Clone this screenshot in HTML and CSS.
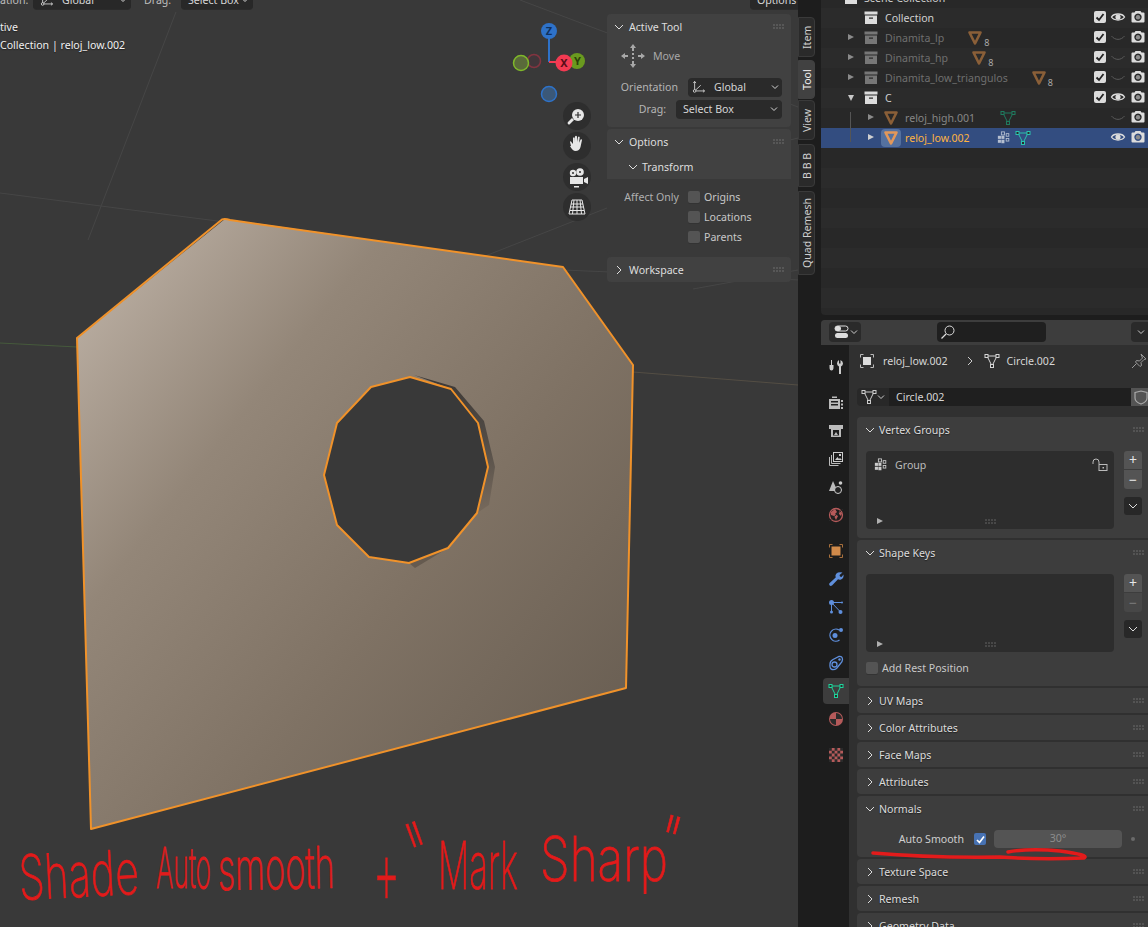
FILE: index.html
```html
<!DOCTYPE html>
<html lang="en">
<head>
<meta charset="utf-8">
<title>Blender – Auto Smooth</title>
<link rel="stylesheet" href="styles.css">
</head>
<body>
<svg class="defs" width="0" height="0" aria-hidden="true">
  <symbol id="tri" viewBox="0 0 16 16"><path d="M3 3h10L8 13z" fill="none" stroke="currentColor" stroke-width="1"/><g fill="#2a2a2a" stroke="currentColor" stroke-width="1"><rect x="1" y="1.500" width="3" height="3"/><rect x="12" y="1.500" width="3" height="3"/><rect x="6.500" y="11.500" width="3" height="3"/></g></symbol>
  <symbol id="obj" viewBox="0 0 16 16"><path d="M2.500 2.500h11L8 13.500z" fill="none" stroke="currentColor" stroke-width="2.600" stroke-linejoin="round"/></symbol>
  <symbol id="vg" viewBox="0 0 16 16"><g fill="currentColor"><rect x="5" y="1" width="3.500" height="3.500" fill="none" stroke="currentColor"/><rect x="1" y="5.500" width="3.500" height="3.500"/><rect x="5" y="5.500" width="3.500" height="3.500"/><rect x="1" y="10" width="3.500" height="3.500"/><rect x="5" y="10" width="3.500" height="4"/><rect x="10.500" y="3" width="3" height="3" fill="none" stroke="currentColor"/><rect x="10.500" y="8.500" width="3" height="3" fill="none" stroke="currentColor"/></g></symbol>
  <symbol id="coll" viewBox="0 0 16 16"><path fill="currentColor" d="M1.500 1.500h13v3h-13zM2 5.500h12v8.500H2zM6 7.500v1.300h4V7.500z" fill-rule="evenodd"/></symbol>
  <symbol id="check" viewBox="0 0 12 12"><rect width="12" height="12" rx="2" fill="currentColor"/><path d="M2.500 6.500l2.500 2.500 4.500-6" fill="none" stroke="#222" stroke-width="1.800"/></symbol>
  <symbol id="eye" viewBox="0 0 16 16"><path d="M1.500 8C4 4 12 4 14.500 8 12 12 4 12 1.500 8z" fill="none" stroke="currentColor" stroke-width="1.400"/><circle cx="8" cy="8" r="2.600" fill="currentColor"/></symbol>
  <symbol id="eyeoff" viewBox="0 0 16 16"><path d="M1.500 7C5 11.500 11 11.500 14.500 7" fill="none" stroke="currentColor" stroke-width="1"/></symbol>
  <symbol id="cam" viewBox="0 0 16 16"><path fill="currentColor" fill-rule="evenodd" d="M2.500 3.500h2l1-1.500h5l1 1.500h2q1 0 1 1v8q0 1-1 1h-11q-1 0-1-1v-8q0-1 1-1zM8 4.500a3.700 3.700 0 1 0 .01 0z"/><circle cx="8" cy="8.200" r="2.200" fill="#8c8c8c"/></symbol>
  <symbol id="down" viewBox="0 0 8 8"><path d="M1 2.500L4 5.500 7 2.500" fill="none" stroke="currentColor" stroke-width="1"/></symbol>
  <symbol id="right" viewBox="0 0 10 10"><path d="M3 1L7 5 3 9" fill="none" stroke="currentColor" stroke-width="1"/></symbol>
  <symbol id="open" viewBox="0 0 10 10"><path d="M1 3L5 7 9 3" fill="none" stroke="currentColor" stroke-width="1"/></symbol>
  <symbol id="grip" viewBox="0 0 11 6"><path d="M0.500 1h1M3.500 1h1M6.500 1h1M9.500 1h1M0.500 4h1M3.500 4h1M6.500 4h1M9.500 4h1" stroke="currentColor" stroke-width="1"/></symbol>
  <symbol id="axes" viewBox="0 0 16 16"><path d="M3 2v10.500h11M3 12.500L10 6" fill="none" stroke="currentColor" stroke-width="1"/><circle cx="3" cy="12.500" r="1.500" fill="#2a2a2a" stroke="currentColor"/><path d="M1.500 3.500L3 1.500 4.500 3.500M12.500 11l2 1.500-2 1.500" fill="none" stroke="currentColor"/></symbol>
  <symbol id="move" viewBox="0 0 24 24"><path fill="currentColor" d="M12 0l3 4h-2v3h-2V4H9zM12 24l-3-4h2v-3h2v3h2zM0 12l4-3v2h3v2H4v2zM24 12l-4 3v-2h-3v-2h3V9z"/><rect x="11" y="9" width="2" height="2" fill="currentColor"/><rect x="11" y="13" width="2" height="2" fill="currentColor"/></symbol>
</svg>

<main class="app">
  <section class="viewport">
    <svg class="scene" width="798" height="927" viewBox="0 0 798 927">
      <defs>
        <linearGradient id="skin" gradientUnits="userSpaceOnUse" x1="90" y1="280" x2="620" y2="700">
          <stop offset="0" stop-color="#baaea2"/>
          <stop offset="0.3" stop-color="#938678"/>
          <stop offset="0.65" stop-color="#7f7264"/>
          <stop offset="1" stop-color="#6b6054"/>
        </linearGradient>
        <linearGradient id="shade" gradientUnits="userSpaceOnUse" x1="450" y1="375" x2="490" y2="510">
          <stop offset="0" stop-color="#3d3936"/>
          <stop offset="0.5" stop-color="#514b45"/>
          <stop offset="1" stop-color="#76695c"/>
        </linearGradient>
      </defs>
      <g stroke="#464646" stroke-width="1" fill="none">
        <path d="M176 12L88 240M0 193L225 222M520 0L610 34M790 104L798 107M607 208L470 262M790 140L798 138M563 270L800 280M693 289L798 270"/>
        <path d="M0 343L77 347" stroke="#465a3c"/>
        <path d="M633 372L798 385" stroke="#544e44"/>
      </g>
      <path d="M225 219L563 267 633 365 626 688 91 829 77 338z" fill="url(#skin)"/>
      <path d="M414 375L455 387 484 421 495 467 489 505 477 513 488 467 478 423 451 389z" fill="url(#shade)"/>
      <path d="M409 563L448 548 415 568z" fill="#655a4f"/>
      <path fill="#393939" stroke="#f0922a" stroke-width="2" stroke-linejoin="round" d="M410 377L451 389 478 423 488 467 477 513 448 548 409 563 369 557 337 525 324 475 337 423 371 387z"/>
      <path d="M222 219.500Q225 218.500 230 220L563 267 633 365 626 688 91 829 77 338z" fill="none" stroke="#f0922a" stroke-width="2" stroke-linejoin="round"/>

      <g class="gizmo">
        <path d="M549 38V62" stroke="#2e72c9" stroke-width="2"/>
        <path d="M549 62H558" stroke="#f33a52" stroke-width="2"/>
        <circle cx="534" cy="61" r="6.500" fill="#40363a" stroke="#823440" stroke-width="1.500"/>
        <circle cx="521" cy="63" r="7.500" fill="#5a6a3a" stroke="#7fb82a" stroke-width="1.500"/>
        <circle cx="549" cy="94" r="7.500" fill="#3b5878" stroke="#2e72c9" stroke-width="1.500"/>
        <circle cx="549" cy="31" r="8" fill="#2e72c9"/>
        <circle cx="577" cy="61" r="8" fill="#6a9a1f"/>
        <circle cx="564" cy="63" r="8.500" fill="#f33a52"/>
        <text x="549" y="35" class="axis z">Z</text>
        <text x="577.500" y="65" class="axis y">Y</text>
        <text x="564" y="67" class="axis x">X</text>
      </g>
      <g class="navbtns">
        <circle cx="577" cy="116" r="14"/><circle cx="577" cy="146" r="14"/><circle cx="577" cy="177" r="14"/><circle cx="577" cy="207" r="14"/>
      </g>
      <g fill="#e6e6e6" stroke="none">
        <circle cx="578" cy="115" r="6"/>
        <path d="M572 118l2 2-4 4q-1 1-2-0t0-2z"/>
        <path d="M578 112v6M575 115h6" stroke="#2f2f2f" stroke-width="1.200"/>
        <path d="M571 146l-1-4q0-1 1-.5l2 2.500v-6q1-1.500 1.700 0v4l.3-5.500q1-1.500 2 0v5.500l1-5q1-1 1.700 .3l-.7 5.500 1.800-3.500q1.200-.5 1.200 .7l-1.500 7q-1 4-5 4-3 0-5.500-5z"/>
        <circle cx="573" cy="173" r="3.200"/><circle cx="580" cy="172" r="3.800"/>
        <path d="M570 177h13v7h-13zM584 179l4-2v7l-4-2z"/>
        <rect x="574" y="186" width="5" height="1.500"/>
      </g>
      <circle cx="573" cy="173" r="1" fill="#2e2e2e"/><circle cx="580" cy="172" r="1" fill="#2e2e2e"/>
      <path d="M572 200h10l3 14h-16zM577 200v14M570.500 207h13M574 200l-1.500 14M580 200l1.500 14M571 204h12M570 210.500h14" fill="none" stroke="#e6e6e6" stroke-width="1"/>
    </svg>

    <div class="hdr">
      <span class="hdr-label first">ation:</span>
      <span class="combo c1"><svg class="i14"><use href="#axes"/></svg><span class="combo-text">Global</span><svg class="i8"><use href="#down"/></svg></span>
      <span class="hdr-label second">Drag:</span>
      <span class="combo c2"><span>Select Box</span><svg class="i8"><use href="#down"/></svg></span>
      <span class="combo c3"><span>Options</span><svg class="i8"><use href="#down"/></svg></span>
    </div>

    <div class="overlay-text">
      <p>tive</p>
      <p>Collection | reloj_low.002</p>
    </div>

    <aside class="npanel">
      <div class="np np-tool">
        <header class="np-head"><svg class="i10"><use href="#open"/></svg><span>Active Tool</span><svg class="grip"><use href="#grip"/></svg></header>
        <div class="tool-row"><svg class="i24"><use href="#move"/></svg><span>Move</span></div>
        <div class="prop-row orient"><label>Orientation</label><span class="combo c4"><svg class="i14"><use href="#axes"/></svg><span class="combo-text">Global</span><svg class="i8"><use href="#down"/></svg></span></div>
        <div class="prop-row drag"><label>Drag:</label><span class="combo c5"><span>Select Box</span><svg class="i8"><use href="#down"/></svg></span></div>
      </div>
      <div class="np np-options">
        <div class="np-options-top">
          <header class="np-head"><svg class="i10"><use href="#open"/></svg><span>Options</span><svg class="grip"><use href="#grip"/></svg></header>
          <div class="sub-head"><svg class="i10"><use href="#open"/></svg><span>Transform</span></div>
        </div>
        <div class="affect">
          <span class="affect-label">Affect Only</span>
          <div class="affect-list">
            <div class="chk-row"><i class="chk"></i><span>Origins</span></div>
            <div class="chk-row"><i class="chk"></i><span>Locations</span></div>
            <div class="chk-row"><i class="chk"></i><span>Parents</span></div>
          </div>
        </div>
      </div>
      <div class="np np-work">
        <header class="np-head"><svg class="i10"><use href="#right"/></svg><span>Workspace</span><svg class="grip"><use href="#grip"/></svg></header>
      </div>
    </aside>
  </section>

  <nav class="vtabs">
    <span class="vtab t-item">Item</span>
    <span class="vtab t-tool active">Tool</span>
    <span class="vtab t-view">View</span>
    <span class="vtab t-bbb">B B B</span>
    <span class="vtab t-quad">Quad Remesh</span>
  </nav>

  <div class="right">
    <section class="outliner">
      <div class="row scene-row"><svg class="i16 ic-scene"><use href="#coll"/></svg><span>Scene Collection</span></div>
      <div class="row odd"><svg class="i16 ic-coll"><use href="#coll"/></svg><span class="name">Collection</span><span class="vis"><svg class="i12"><use href="#check"/></svg><svg class="i16"><use href="#eye"/></svg><svg class="i16"><use href="#cam"/></svg></span></div>
      <div class="row dim"><b class="tri-r"></b><svg class="i16 ic-coll"><use href="#coll"/></svg><span class="name">Dinamita_lp</span><svg class="i16 ic-obj g1"><use href="#obj"/></svg><em class="cnt">8</em><span class="vis"><svg class="i12"><use href="#check"/></svg><svg class="i16 off"><use href="#eyeoff"/></svg><svg class="i16"><use href="#cam"/></svg></span></div>
      <div class="row odd dim"><b class="tri-r"></b><svg class="i16 ic-coll"><use href="#coll"/></svg><span class="name">Dinamita_hp</span><svg class="i16 ic-obj g2"><use href="#obj"/></svg><em class="cnt">8</em><span class="vis"><svg class="i12"><use href="#check"/></svg><svg class="i16 off"><use href="#eyeoff"/></svg><svg class="i16"><use href="#cam"/></svg></span></div>
      <div class="row dim"><b class="tri-r"></b><svg class="i16 ic-coll"><use href="#coll"/></svg><span class="name">Dinamita_low_triangulos</span><svg class="i16 ic-obj g3"><use href="#obj"/></svg><em class="cnt">8</em><span class="vis"><svg class="i12"><use href="#check"/></svg><svg class="i16 off"><use href="#eyeoff"/></svg><svg class="i16"><use href="#cam"/></svg></span></div>
      <div class="row odd"><b class="tri-d"></b><svg class="i16 ic-coll"><use href="#coll"/></svg><span class="name">C</span><span class="vis"><svg class="i12"><use href="#check"/></svg><svg class="i16"><use href="#eye"/></svg><svg class="i16"><use href="#cam"/></svg></span></div>
      <div class="row child low"><b class="tri-r"></b><svg class="i16 ic-obj"><use href="#obj"/></svg><span class="name">reloj_high.001</span><svg class="i16 ic-tri-dim"><use href="#tri"/></svg><span class="vis"><svg class="i16 off"><use href="#eyeoff"/></svg><svg class="i16"><use href="#cam"/></svg></span></div>
      <div class="row child sel"><b class="tri-r"></b><span class="obj-chip"><svg class="i16"><use href="#obj"/></svg></span><span class="name">reloj_low.002</span><svg class="i14 ic-vg"><use href="#vg"/></svg><svg class="i16 ic-tri"><use href="#tri"/></svg><span class="vis"><svg class="i16"><use href="#eye"/></svg><svg class="i16"><use href="#cam"/></svg></span></div>
      <div class="row"></div><div class="row odd"></div><div class="row"></div><div class="row odd"></div><div class="row"></div><div class="row odd"></div><div class="row"></div><div class="row odd"></div>
    </section>

    <section class="props">
      <header class="props-head">
        <span class="editor-btn"><svg width="15" height="14" viewBox="0 0 15 14"><rect x="1" y="1" width="13" height="5" rx="2.500" fill="none" stroke="#ddd"/><rect x="1" y="1" width="6" height="5" rx="2.500" fill="#ddd"/><rect x="1" y="8" width="13" height="5" rx="2.500" fill="#ddd"/></svg><svg class="i8"><use href="#down"/></svg></span>
        <span class="search"><svg width="16" height="16" viewBox="0 0 16 16"><circle cx="9.500" cy="6.500" r="4.500" fill="none" stroke="#ddd"/><path d="M6 10l-4.500 4.500" stroke="#ddd" stroke-width="1.200"/></svg></span>
        <span class="corner-btn"><svg class="i8"><use href="#down"/></svg></span>
      </header>
      <div class="props-body">
        <nav class="ptabs">
          <span class="ptab"><svg viewBox="0 0 16 16"><path fill="#ccc" d="M3 1h1v5h1.500v2.500q0 3-2 3t-2-3V6H3zM11 1v3.500h1.500V1q2.500 1 2.500 3.500 0 2-2 3V15h-2V7.500q-2-1-2-3Q9 2 11 1z"/></svg></span>
          <span class="pgap g-a"></span>
          <span class="ptab"><svg viewBox="0 0 16 16"><path fill="#bbb" fill-rule="evenodd" d="M1 4h11v10H1zM3 6v1.500h7V6zM3 9v1.500h7V9zM13 5h2v2h-2zM13 8.500h2v2h-2zM13 12h2v2h-2zM4 1.500h5V3H4z"/></svg></span>
          <span class="ptab"><svg viewBox="0 0 16 16"><path fill="#bbb" fill-rule="evenodd" d="M1 2h14v4h-2v8H3V6H1zM5 7v5.500h6V7z"/><path fill="#bbb" d="M6 12l2-3 2 3z"/></svg></span>
          <span class="ptab"><svg viewBox="0 0 16 16"><path fill="none" stroke="#bbb" d="M1.500 6v8.500h9M3.500 4v8.500h9"/><rect x="5.500" y="1.500" width="9" height="9" fill="none" stroke="#ccc"/><path fill="#ccc" d="M7 9l2.500-3 1.500 2 1-1 2 2zM11 3h2v2h-2z"/></svg></span>
          <span class="ptab"><svg viewBox="0 0 16 16"><path fill="#bbb" d="M5 2L9.500 12H1z"/><circle cx="12.500" cy="4" r="1.800" fill="#ccc"/><circle cx="10" cy="11" r="3.500" fill="#222" stroke="#ccc"/></svg></span>
          <span class="ptab"><svg viewBox="0 0 16 16"><circle cx="8" cy="8" r="6.500" fill="none" stroke="#b55a5a" stroke-width="1.300"/><path fill="#b55a5a" d="M3 5l4-3 2 3-2 2 3 2-2 4-2-4-3-1zM11 4l3 2-1 3-2-2z"/><path d="M1 14L15 2" stroke="#2a2a2a"/></svg></span>
          <span class="pgap g-b"></span>
          <span class="ptab"><svg viewBox="0 0 16 16"><rect x="3.500" y="3.500" width="9" height="9" fill="#d08a4a"/><path d="M1.500 4.500v-3h3M11.500 1.500h3v3M14.500 11.500v3h-3M4.500 14.500h-3v-3" fill="none" stroke="#a9703c"/></svg></span>
          <span class="ptab"><svg viewBox="0 0 16 16"><path fill="#5f8fdc" d="M14.500 1.500l-3 2.500.5 1.500 1.500.5 2-2.500q.5 4-2.500 5-1.500.5-3-.2L4 14.500q-1.500 1-2.500-.2t.2-2.300l6-5.500q-.8-2 .5-3.800 2-2 6.300-1.200z"/></svg></span>
          <span class="ptab"><svg viewBox="0 0 16 16"><path d="M3.500 3.500H14M3.500 3.500V12.500M3.500 3.500L12.500 13" stroke="#5f8fdc" fill="none"/><circle cx="3.500" cy="3.500" r="2.500" fill="#5f8fdc"/><circle cx="3.500" cy="13" r="1.500" fill="#5f8fdc"/><circle cx="12.500" cy="13" r="2" fill="#5f8fdc"/><circle cx="14" cy="3.500" r="1" fill="#5f8fdc"/></svg></span>
          <span class="ptab"><svg viewBox="0 0 16 16"><path d="M11.500 13A6 6 0 1 1 11 3" fill="none" stroke="#5f8fdc" stroke-width="1.300"/><circle cx="7" cy="8.500" r="2.500" fill="#5f8fdc"/><circle cx="13" cy="3" r="2" fill="#5f8fdc"/></svg></span>
          <span class="ptab"><svg viewBox="0 0 16 16"><path d="M2 9q0-3 3-4.500L11 1.500q3.500-.5 3.500 3 0 2-2 4l-4 5q-2 1.500-4.500 1T2 9z" fill="none" stroke="#5f8fdc" stroke-width="1.300"/><circle cx="6.500" cy="9.500" r="2.500" fill="none" stroke="#5f8fdc" stroke-width="1.300"/><circle cx="11.500" cy="4.500" r="1.200" fill="#5f8fdc"/></svg></span>
          <span class="ptab on"><svg class="tri-green"><use href="#tri"/></svg></span>
          <span class="ptab"><svg viewBox="0 0 16 16"><circle cx="8" cy="8" r="7" fill="#b55a5a"/><path d="M8 2v6H2a6 6 0 0 0 6 6V8h6a6 6 0 0 0-6-6z" fill="#2a2a2a"/></svg></span>
          <span class="pgap g-c"></span>
          <span class="ptab"><svg viewBox="0 0 16 16"><rect x="1" y="1" width="14" height="14" fill="#b55a5a"/><path fill="#2a2a2a" d="M1 1h2.800v2.800H1zM6.600 1h2.800v2.800H6.600zM12.200 1H15v2.800h-2.800zM3.800 3.800h2.800v2.800H3.800zM9.400 3.800h2.800v2.800H9.400zM1 6.600h2.800v2.800H1zM6.600 6.600h2.800v2.800H6.600zM12.200 6.600H15v2.800h-2.800zM3.800 9.400h2.800v2.800H3.800zM9.400 9.400h2.800v2.800H9.400zM1 12.200h2.800V15H1zM6.600 12.200h2.800V15H6.600zM12.200 12.200H15V15h-2.800z"/></svg></span>
        </nav>
        <div class="pmain">
          <div class="crumbs">
            <svg class="sel-ic" viewBox="0 0 16 16"><rect x="4" y="4" width="8" height="8" fill="#ddd"/><path d="M1.500 4.500v-3h3M11.500 1.500h3v3M14.500 11.500v3h-3M4.500 14.500h-3v-3" fill="none" stroke="#bbb"/></svg>
            <span class="cr-a">reloj_low.002</span>
            <svg class="i10 cr-sep"><use href="#right"/></svg>
            <svg class="i16 cr-tri"><use href="#tri"/></svg>
            <span>Circle.002</span>
            <svg class="pin" viewBox="0 0 16 16"><path d="M10 1l5 5-2 .5-3 3 .5 3-1.500 1L4.500 9l1-1.500 3 .5 3-3zM5.500 10.500L1 15" fill="none" stroke="#999"/></svg>
          </div>
          <div class="datablock">
            <span class="db-ic"><svg class="i16"><use href="#tri"/></svg><svg class="i8"><use href="#down"/></svg></span>
            <span class="db-field">Circle.002</span>
            <span class="db-shield"><svg width="14" height="15" viewBox="0 0 14 15"><path d="M1 2.500L7 1l6 1.500V8q0 4-6 6-6-2-6-6z" fill="none" stroke="#aaa" stroke-width="1.200"/></svg></span>
          </div>

          <div class="panel">
            <header class="p-head"><svg class="i10"><use href="#open"/></svg><span>Vertex Groups</span><svg class="grip"><use href="#grip"/></svg></header>
            <div class="list-wrap">
              <div class="list">
                <div class="list-item"><svg class="i14"><use href="#vg"/></svg><span>Group</span><svg class="lock" viewBox="0 0 16 16"><rect x="7" y="7.500" width="8" height="6" fill="none" stroke="#bbb"/><path d="M1 7V5q0-3 3-3t3 3v2" fill="none" stroke="#bbb"/><rect x="10.500" y="10" width="1.500" height="1.500" fill="#bbb"/></svg></div>
                <div class="list-foot"><b class="tri-r"></b><svg class="grip"><use href="#grip"/></svg></div>
              </div>
              <div class="list-btns">
                <div class="stack"><span class="sq plus">+</span><span class="sq minus">−</span></div>
                <span class="sq drop"><svg class="i10"><use href="#open"/></svg></span>
              </div>
            </div>
          </div>

          <div class="panel">
            <header class="p-head"><svg class="i10"><use href="#open"/></svg><span>Shape Keys</span><svg class="grip"><use href="#grip"/></svg></header>
            <div class="list-wrap flush">
              <div class="list">
                <div class="list-item empty"></div>
                <div class="list-foot"><b class="tri-r"></b><svg class="grip"><use href="#grip"/></svg></div>
              </div>
              <div class="list-btns">
                <div class="stack"><span class="sq plus">+</span><span class="sq minus faded">−</span></div>
                <span class="sq drop"><svg class="i10"><use href="#open"/></svg></span>
              </div>
            </div>
            <div class="rest"><i class="chk"></i><span>Add Rest Position</span></div>
          </div>

          <div class="panel"><header class="p-head"><svg class="i10"><use href="#right"/></svg><span>UV Maps</span><svg class="grip"><use href="#grip"/></svg></header></div>
          <div class="panel"><header class="p-head"><svg class="i10"><use href="#right"/></svg><span>Color Attributes</span><svg class="grip"><use href="#grip"/></svg></header></div>
          <div class="panel"><header class="p-head"><svg class="i10"><use href="#right"/></svg><span>Face Maps</span><svg class="grip"><use href="#grip"/></svg></header></div>
          <div class="panel"><header class="p-head"><svg class="i10"><use href="#right"/></svg><span>Attributes</span><svg class="grip"><use href="#grip"/></svg></header></div>

          <div class="panel">
            <header class="p-head"><svg class="i10"><use href="#open"/></svg><span>Normals</span><svg class="grip"><use href="#grip"/></svg></header>
            <div class="normals">
              <span class="n-label">Auto Smooth</span>
              <span class="n-check"><svg width="9" height="9" viewBox="0 0 9 9"><path d="M1 5l2.500 2.500L8 1.500" fill="none" stroke="#fff" stroke-width="1.700"/></svg></span>
              <span class="n-field">30°</span>
              <i class="n-dot"></i>
            </div>
          </div>

          <div class="panel"><header class="p-head"><svg class="i10"><use href="#right"/></svg><span>Texture Space</span><svg class="grip"><use href="#grip"/></svg></header></div>
          <div class="panel"><header class="p-head"><svg class="i10"><use href="#right"/></svg><span>Remesh</span><svg class="grip"><use href="#grip"/></svg></header></div>
          <div class="panel"><header class="p-head"><svg class="i10"><use href="#right"/></svg><span>Geometry Data</span><svg class="grip"><use href="#grip"/></svg></header></div>
        </div>
      </div>
    </section>
  </div>
</main>

<svg class="ink" width="1148" height="927" viewBox="0 0 1148 927">
  <path d="M873 853Q930 858 1000 857 1040 860 1084 858 1090 855 1060 851 1030 848 1008 852" fill="none" stroke="#e31b1b" stroke-width="3.500" stroke-linecap="round"/>
  <g class="hand">
    <text x="20" y="900" textLength="120" lengthAdjust="spacingAndGlyphs" font-size="62" transform="rotate(-3 20 900)">Shade</text>
    <text x="156" y="888" textLength="55" lengthAdjust="spacingAndGlyphs" font-size="56">Auto</text>
    <text x="218" y="890" textLength="117" lengthAdjust="spacingAndGlyphs" font-size="58" transform="rotate(-1 218 890)">smooth</text>
    <text x="373" y="904" textLength="27" lengthAdjust="spacingAndGlyphs" font-size="92">+</text>
    <text x="404" y="895" textLength="22" lengthAdjust="spacingAndGlyphs" font-size="100" transform="rotate(-20 415 836)">"</text>
    <text x="438" y="889" textLength="80" lengthAdjust="spacingAndGlyphs" font-size="66">Mark</text>
    <text x="540" y="881" textLength="128" lengthAdjust="spacingAndGlyphs" font-size="62">Sharp</text>
    <text x="662" y="868" textLength="22" lengthAdjust="spacingAndGlyphs" font-size="72" transform="rotate(15 672 825)">"</text>
  </g>
</svg>
</body>
</html>
```

FILE: styles.css
```css
* { box-sizing: border-box; }
html, body { margin: 0; height: 100%; }
body {
  position: relative;
  width: 1148px;
  height: 927px;
  overflow: hidden;
  background: #1d1d1d;
  font-family: "Noto Sans", "Open Sans", sans-serif;
  font-size: 10.6px;
  color: #d6d6d6;
}
.defs { position: absolute; }
svg { display: block; flex: none; }
.i8 { width: 8px; height: 8px; }
.i10 { width: 10px; height: 10px; }
.i12 { width: 12px; height: 12px; }
.i14 { width: 14px; height: 14px; }
.i16 { width: 16px; height: 16px; }
.i24 { width: 24px; height: 24px; }
.grip { width: 11px; height: 6px; color: #9a9a9a; margin-left: auto; }

.app { display: flex; width: 1148px; height: 927px; }

/* 3D viewport */
.viewport { position: relative; flex: 0 0 798px; height: 927px; background: #393939; overflow: hidden; }
.scene { position: absolute; left: 0; top: 0; }
.axis { font-family: "Noto Sans", sans-serif; font-size: 11px; font-weight: 700; text-anchor: middle; }
.axis.z { fill: #10305c; }
.axis.y { fill: #2c4208; }
.axis.x { fill: #5a0d18; }
.navbtns circle { fill: #2e2e2e; }

.hdr { position: absolute; left: 0; top: -10px; width: 798px; height: 19px; }
.hdr-label { position: absolute; top: 3px; color: #bdbdbd; }
.hdr-label.first { left: 0; }
.hdr-label.second { left: 144px; }
.combo {
  display: flex; align-items: center; height: 19px; padding: 0 4px 0 7px;
  background: #282828; border-radius: 4px; box-shadow: 0 1px 0 #2b2b2b; color: #d6d6d6;
}
.combo > .i8 { margin-left: auto; }
.combo-text { margin-left: 8px; }
.hdr .combo { position: absolute; top: 0; }
.c1 { left: 33px; width: 98px; }
.c2 { left: 181px; width: 72px; }
.c3 { left: 750px; width: 61px; z-index: 2; }

.overlay-text { position: absolute; left: 0; top: 20px; color: #f0f0f0; text-shadow: 0 1px 1px #222; }
.overlay-text p { margin: 0 0 3px; line-height: 15px; }

/* N panel */
.npanel { position: absolute; left: 607px; top: 14px; width: 184px; display: flex; flex-direction: column; gap: 2px; }
.np { background: #414141; border-radius: 4px; overflow: hidden; }
.np-head { display: flex; align-items: center; height: 26px; padding: 0 7px; color: #dedede; }
.np-head > span { margin-left: 5px; }
.np-tool { height: 113px; }
.tool-row { display: flex; align-items: center; gap: 8px; padding: 2px 0 0 14px; height: 30px; color: #a8a8a8; }
.prop-row { display: flex; align-items: center; height: 18px; }
.prop-row label { color: #b5b5b5; text-align: right; }
.orient { margin-top: 8px; }
.orient label { width: 71px; }
.c4 { margin-left: 10px; width: 94px; height: 18px; background: #2a2a2a; padding: 0 3px 0 4px; }
.drag { margin-top: 4px; }
.drag label { width: 59px; }
.c5 { margin-left: 10px; width: 106px; height: 18px; background: #2a2a2a; }
.np-options { height: 126px; background: #393939; }
.np-options-top { height: 50px; background: #414141; }
.sub-head { display: flex; align-items: center; height: 24px; padding: 0 0 0 21px; color: #dedede; }
.sub-head > span { margin-left: 4px; }
.affect { display: flex; padding-top: 8px; }
.affect-label { width: 72px; text-align: right; color: #b0b0b0; line-height: 20px; }
.affect-list { margin-left: 9px; }
.chk-row { display: flex; align-items: center; height: 20px; gap: 4px; color: #c8c8c8; }
.chk { display: block; flex: none; width: 12px; height: 12px; border-radius: 2px; background: #545454; box-shadow: 0 1px 0 #333; }
.np-work { height: 25px; }

/* vertical tabs */
.vtabs { flex: 0 0 23px; height: 927px; background: #1d1d1d; position: relative; }
.vtab {
  position: absolute; left: 0; width: 17px; display: flex; align-items: center; justify-content: center;
  writing-mode: vertical-rl; transform: rotate(180deg);
  background: #2a2a2a; color: #cfcfcf; border-radius: 4px 0 0 4px; border: 1px solid #3a3a3a;
}
.vtab.active { background: #414141; color: #f0f0f0; border-color: #414141; }
.t-item { top: 17px; height: 40px; }
.t-tool { top: 60px; height: 39px; }
.t-view { top: 100px; height: 40px; }
.t-bbb { top: 144px; height: 43px; }
.t-quad { top: 191px; height: 84px; }

/* right column */
.right { flex: 0 0 327px; height: 927px; display: flex; flex-direction: column; gap: 5px; overflow: hidden; }
.outliner { height: 315px; background: #282828; overflow: hidden; border-radius: 0 0 0 4px; }
.row { position: relative; display: flex; align-items: center; height: 20px; padding: 0 0 0 42px; background: #282828; color: #d0d0d0; }
.row.odd { background: #2b2b2b; }
.scene-row { margin-top: -12px; padding-left: 22px; gap: 5px; }
.ic-scene { color: #ddd; }
.ic-coll { color: #dcdcdc; }
.row .name { margin-left: 6px; }
.row.dim .name { color: #6f6f6f; }
.row.dim .ic-coll { color: #777; }
.tri-r, .tri-d { position: absolute; display: block; width: 0; height: 0; }
.tri-r { border-left: 6px solid #8a8a8a; border-top: 3.5px solid transparent; border-bottom: 3.5px solid transparent; }
.tri-d { border-top: 6px solid #c8c8c8; border-left: 3.5px solid transparent; border-right: 3.5px solid transparent; }
.row > .tri-r { left: 27px; top: 6px; }
.row > .tri-d { left: 27px; top: 7px; }
.ic-obj { color: #8a5f38; }
.g1 { margin-left: 23px; }
.g2 { margin-left: 23px; }
.g3 { margin-left: 23px; }
.cnt { font-style: normal; font-size: 9px; color: #aaa; align-self: flex-end; margin: 0 0 -1px 1px; }
.vis { position: absolute; right: 2px; top: 1px; display: flex; justify-content: flex-end; align-items: center; gap: 4px; height: 16px; color: #dcdcdc; }
.vis .off { color: #5a5a5a; }
.row.child { padding-left: 62px; }
.row.child::before { content: ""; position: absolute; left: 29px; width: 1px; background: #555; }
.row.child.low::before { top: 4px; height: 16px; }
.row.child.sel::before { top: 0; height: 14px; }
.row.child > .tri-r { left: 47px; }
.low .name { color: #868686; }
.ic-tri-dim { margin-left: 25px; color: #1f7a5e; }
.sel { background: #334d80; }
.sel .name { color: #ffb340; }
.sel > .tri-r { border-left-color: #d0d0d0; }
.obj-chip { display: flex; align-items: center; justify-content: center; width: 20px; height: 18px; margin-left: -2px; background: #55719f; border-radius: 4px; color: #e3985a; }
.sel .name { margin-left: 4px; }
.ic-vg { margin-left: 27px; color: #b5bfd0; }
.ic-tri { margin-left: 4px; color: #2ac2ae; }

/* properties */
.props { flex: 1; background: #303030; display: flex; flex-direction: column; min-height: 0; border-radius: 4px 0 0 0; overflow: hidden; }
.props-head { position: relative; height: 25px; flex: none; background: #3d3d3d; }
.editor-btn { position: absolute; left: 8px; top: 2px; width: 32px; height: 20px; display: flex; align-items: center; gap: 1px; padding-left: 5px; background: #2a2a2a; border-radius: 4px; color: #ccc; }
.search { position: absolute; left: 116px; top: 2px; width: 109px; height: 20px; padding: 2px 0 0 3px; background: #1f1f1f; border-radius: 4px; }
.corner-btn { position: absolute; left: 310px; top: 2px; width: 24px; height: 20px; padding: 6px 0 0 6px; background: #2a2a2a; border-radius: 4px; color: #ccc; }
.props-body { display: flex; flex: 1; min-height: 0; }
.ptabs { flex: 0 0 28px; background: #1d1d1d; display: flex; flex-direction: column; align-items: flex-end; padding-top: 8px; }
.ptab { display: flex; align-items: center; justify-content: center; width: 26px; height: 28px; border-radius: 4px 0 0 4px; }
.ptab svg { width: 16px; height: 16px; }
.ptab.on { background: #3d3d3d; height: 26px; margin: 1px 0; }
.tri-green { color: #1fd39b; }
.pgap { display: block; width: 100%; }
.g-a { height: 8px; }
.g-b { height: 8px; }
.g-c { height: 8px; }
.pmain { flex: 1; padding: 0 0 0 8px; min-width: 0; }
.crumbs { position: relative; display: flex; align-items: center; height: 32px; padding: 0 0 0 2px; margin-bottom: 11px; color: #d6d6d6; }
.sel-ic { width: 16px; height: 16px; }
.cr-a { margin-left: 8px; }
.cr-sep { margin: 0 9px 0 17px; color: #ccc; }
.cr-tri { margin-right: 7px; color: #d6d6d6; }
.pin { position: absolute; left: 274px; top: 8px; width: 16px; height: 16px; }
.datablock { display: flex; height: 18px; margin-bottom: 11px; }
.db-ic { flex: 0 0 32px; display: flex; align-items: center; gap: 0; padding-left: 4px; background: #282828; border-radius: 4px 0 0 4px; color: #ccc; }
.db-field { flex: 0 0 242px; background: #1f1f1f; color: #d6d6d6; padding-left: 7px; line-height: 18px; }
.db-shield { flex: 1; display: flex; align-items: center; padding-left: 3px; background: #545454; }
.panel { background: #3d3d3d; border-radius: 4px 0 0 4px; margin-bottom: 2px; overflow: hidden; }
.p-head { display: flex; align-items: center; height: 25px; padding: 0 4px 0 8px; color: #dcdcdc; text-shadow: 0 1px 1px #222; }
.p-head > span { margin-left: 4px; }
.list-wrap { display: flex; padding: 9px 6px 9px 9px; }
.list-wrap.flush { padding-bottom: 0; }
.list { display: flex; flex-direction: column; width: 248px; height: 78px; background: #2d2d2d; border-radius: 4px; }
.list-item { display: flex; align-items: center; height: 20px; margin-top: 4px; padding: 0 6px 0 8px; color: #bcbcbc; gap: 7px; }
.list-item svg.i14 { color: #ccc; }
.lock { width: 16px; height: 16px; margin-left: auto; }
.list-foot { position: relative; margin-top: auto; height: 14px; display: flex; align-items: center; justify-content: center; }
.list-foot .grip { margin: 0; }
.list-foot .tri-r { left: 11px; top: 3px; border-left-color: #b0b0b0; }
.list-btns { margin-left: 10px; width: 18px; display: flex; flex-direction: column; }
.stack { display: flex; flex-direction: column; gap: 1px; height: 38px; }
.sq { display: flex; align-items: center; justify-content: center; width: 18px; height: 18px; background: #545454; color: #e6e6e6; font-size: 14px; line-height: 16px; border-radius: 3px 3px 0 0; }
.sq.minus { height: 19px; border-radius: 0 0 3px 3px; }
.sq.faded { background: #474747; color: #7c7c7c; }
.sq.drop { margin-top: 8px; background: #282828; border-radius: 3px; color: #ddd; }
.rest { display: flex; align-items: center; gap: 4px; padding: 10px 0 12px 9px; color: #c8c8c8; height: 34px; }
.normals { display: flex; align-items: center; height: 36px; padding: 9px 0; }
.n-label { width: 107px; text-align: right; color: #cfcfcf; }
.n-check { margin-left: 10px; width: 12px; height: 12px; display: flex; align-items: center; justify-content: center; background: #4772b3; border-radius: 2px; }
.n-field { margin-left: 8px; width: 128px; height: 18px; background: #545454; border-radius: 4px; color: #8c8c8c; text-align: center; line-height: 17px; }
.n-dot { margin-left: 9px; width: 4px; height: 4px; border-radius: 50%; background: #6a6a6a; }

/* red annotation on top of everything */
.ink { position: absolute; left: 0; top: 0; pointer-events: none; }
.hand text { font-family: "Inter", "Noto Sans", sans-serif; font-weight: 200; fill: #e31b1b; stroke: #e31b1b; stroke-width: 0.8px; }
```
